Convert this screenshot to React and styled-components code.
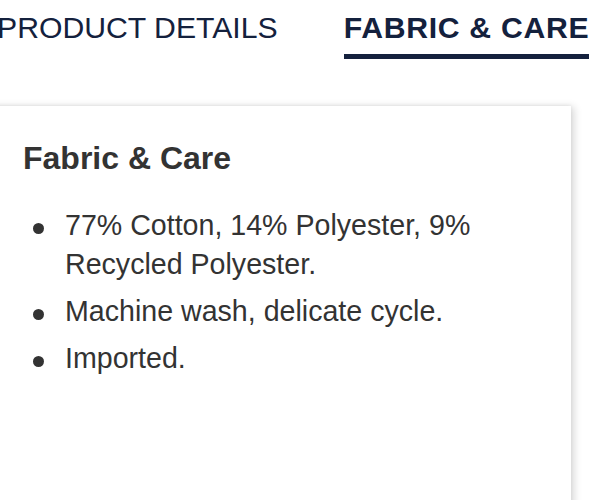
import React, { useState } from "react";
import styled, { createGlobalStyle } from "styled-components";

const GlobalStyle = createGlobalStyle`
  body {
    margin: 0;
    background: #fff;
    overflow: hidden;
    font-family: "Liberation Sans", Arial, Helvetica, sans-serif;
  }
`;

const Page = styled.div`
  width: 615px;
  height: 500px;
  overflow: hidden;
`;

const Tabs = styled.div`
  display: flex;
  gap: 66px;
  padding-top: 11px;
  margin-left: -3px;
`;

const Tab = styled.button`
  font-family: inherit;
  font-size: 30.2px;
  line-height: 34px;
  font-weight: ${(p) => (p.$active ? 700 : 400)};
  letter-spacing: ${(p) => (p.$active ? "0.7px" : "0")};
  color: #14213d;
  background: none;
  border: none;
  border-bottom: 5px solid ${(p) => (p.$active ? "#14213d" : "transparent")};
  padding: 0 0 9px;
  margin: 0;
  cursor: pointer;
  white-space: nowrap;
`;

const Card = styled.div`
  margin-top: 47px;
  margin-left: -20px;
  width: 591px;
  height: 420px;
  box-sizing: border-box;
  padding: 34px 0 0 43px;
  background: #fff;
  box-shadow: 3px 1px 8px rgba(0, 0, 0, 0.16), 0 -1px 3px rgba(0, 0, 0, 0.05);
  color: #333;
`;

const Heading = styled.h2`
  margin: 0;
  font-size: 32px;
  line-height: 36px;
  font-weight: 700;
  color: #333;
`;

const List = styled.ul`
  list-style: none;
  margin: 30px 0 0;
  padding: 0 0 0 42px;
  display: flex;
  flex-direction: column;
  gap: 8px;
`;

const Item = styled.li`
  position: relative;
  font-size: 28.6px;
  line-height: 39px;
  width: 430px;

  &::before {
    content: "";
    position: absolute;
    left: -32px;
    top: 17px;
    width: 11px;
    height: 11px;
    border-radius: 50%;
    background: #333;
  }
`;

const items = [
  "77% Cotton, 14% Polyester, 9% Recycled Polyester.",
  "Machine wash, delicate cycle.",
  "Imported.",
];

const App = () => {
  const [tab, setTab] = useState("care");

  return (
    <Page>
      <GlobalStyle />
      <Tabs>
        <Tab $active={tab === "details"} onClick={() => setTab("details")}>
          PRODUCT DETAILS
        </Tab>
        <Tab $active={tab === "care"} onClick={() => setTab("care")}>
          FABRIC &amp; CARE
        </Tab>
      </Tabs>
      <Card>
        <Heading>Fabric &amp; Care</Heading>
        <List>
          {items.map((text) => (
            <Item key={text}>{text}</Item>
          ))}
        </List>
      </Card>
    </Page>
  );
};

export default App;
